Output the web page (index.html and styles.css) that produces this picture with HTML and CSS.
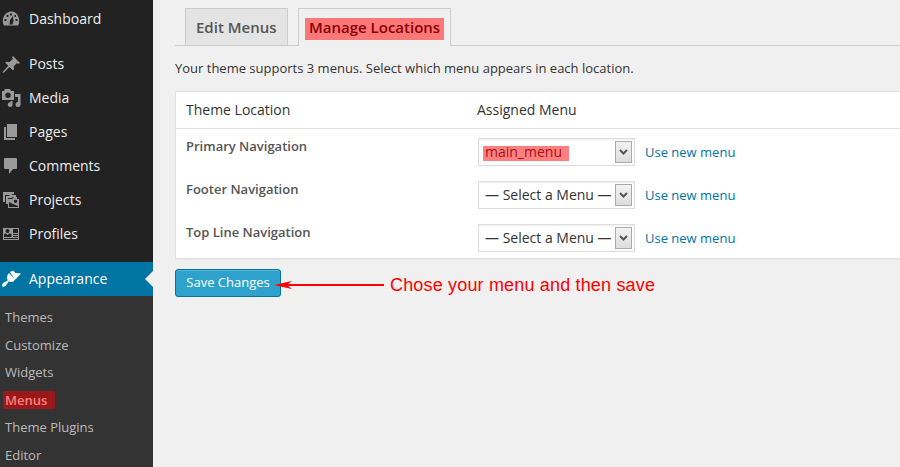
FILE: index.html
```
<!DOCTYPE html>
<html lang="en">
<head>
<meta charset="utf-8">
<title>Manage Locations</title>
<link rel="stylesheet" href="styles.css">
</head>
<body>
<div class="app">
<aside class="sidebar">
  <ul class="menu">
    <li class="item gap-after"><svg viewBox="0 0 20 20"><path fill-rule="evenodd" d="M3 16.500C1.500 14 1.200 10 3 7C6 1 15 1 17 7C18.800 10 18.500 14 17 16.500ZM8.500 15.500H11.500L12.500 12L12 7L9 11ZM9 4.500V6.500H11V4.500ZM5.500 6V8H7.500V6ZM3.500 10V12H5.500V10ZM14.500 10V12H16.500V10ZM13.500 6V8H15V6Z"/></svg><span>Dashboard</span></li>
    <li class="item"><svg viewBox="0 0 20 20"><path d="M12 2L19 9L17 10L16 9L12.500 12.500C13.500 14 13 15.500 12 16.500L8.500 13L3 18.500L1.500 19L2 17.500L7.300 11.800L4 8.500C5.500 7.500 7 7.500 8.300 8.200L12 4.700L11 3.500Z"/></svg><span>Posts</span></li>
    <li class="item"><svg viewBox="0 0 20 20"><path fill-rule="evenodd" d="M1 3H3L4 1H9L10 3H13V12H1ZM7 4.500A2.700 2.700 0 1 0 7 9.900A2.700 2.700 0 1 0 7 4.500Z"/><path d="M14 6H19.500V16.500A2.500 2.500 0 1 1 17 14V9H14ZM11.500 12V17A2.400 2.400 0 1 1 9.500 14.200V13H11.500Z"/></svg><span>Media</span></li>
    <li class="item"><svg viewBox="0 0 20 20"><path d="M6 2H16V15H6ZM3 5H5V16H14V18H3Z"/></svg><span>Pages</span></li>
    <li class="item"><svg viewBox="0 0 20 20"><path d="M4 2H15Q16 2 16 3V12Q16 13 15 13H12L8 18V13H4Q3 13 3 12V3Q3 2 4 2Z"/></svg><span>Comments</span></li>
    <li class="item"><svg viewBox="0 0 20 20"><path d="M2 2H13V4H10L9 5H4V12H2ZM5 6H8L10 4L12 5H15V7H12L10 8H7V14H5Z"/><path fill-rule="evenodd" d="M7 9H11L13 7H16V9H18V18H7ZM14.500 9.500A1.700 1.700 0 1 0 14.500 13A1.700 1.700 0 1 0 14.500 9.500ZM8 12V17H17V16L12 14Z"/></svg><span>Projects</span></li>
    <li class="item"><svg viewBox="0 0 20 20"><path fill-rule="evenodd" d="M2 4H18V16H2ZM6.500 5A2 2 0 1 0 6.500 9A2 2 0 1 0 6.500 5ZM3 13H10.500V10L8 9.500L6.500 11L5 9.500L3 10ZM12 5V9H17V5ZM12 10V11H17V10ZM12 12V13H17V12ZM3 14V15H17V14Z"/></svg><span>Profiles</span></li>
    <li class="item current"><svg viewBox="0 0 20 20"><path d="M9 3L12 1.500L14.500 4L20 4.500L14.500 10.500L13.500 10ZM8 4L14 10.500L12.500 12.500L9.500 13L7.500 12.500L4.500 17L2 18L1 16.500L2 14L6.700 11.500L6 9L6.500 6Z"/></svg><span>Appearance</span></li>
  </ul>
  <ul class="submenu">
    <li>Themes</li><li>Customize</li><li>Widgets</li><li><b class="mark-menus">Menus</b></li><li>Theme Plugins</li><li>Editor</li>
  </ul>
</aside>
<main class="content">
  <nav class="tabs"><a class="tab edit">Edit Menus</a><a class="tab active"><span>Manage Locations</span></a></nav>
  <p class="intro">Your theme supports 3 menus. Select which menu appears in each location.</p>
  <section class="table">
    <div class="row head"><span>Theme Location</span><span>Assigned Menu</span></div>
    <div class="row"><strong>Primary Navigation</strong><div class="select"><span class="mark-main">main_menu</span><i><svg viewBox="0 0 9 7"><path d="M1 1L4.500 4.500L8 1"/></svg></i></div><a>Use new menu</a></div>
    <div class="row"><strong>Footer Navigation</strong><div class="select"><span>— Select a Menu —</span><i><svg viewBox="0 0 9 7"><path d="M1 1L4.500 4.500L8 1"/></svg></i></div><a>Use new menu</a></div>
    <div class="row"><strong>Top Line Navigation</strong><div class="select"><span>— Select a Menu —</span><i><svg viewBox="0 0 9 7"><path d="M1 1L4.500 4.500L8 1"/></svg></i></div><a>Use new menu</a></div>
  </section>
  <div class="actions"><button>Save Changes</button><svg class="arrow" viewBox="0 0 112 12"><path class="line" d="M10 6H111"/><path d="M1 6L19 2L14 6L19 10Z"/></svg><span class="note">Chose your menu and then save</span></div>
</main>
</div>
</body>
</html>
```
FILE: styles.css
```
* { box-sizing: border-box; }
body { margin: 0; background: #f0f0f0; color: #333; font: 13px/18px "Open Sans", sans-serif; }
ul, p { margin: 0; padding: 0; list-style: none; }
.app { display: flex; width: 900px; height: 467px; overflow: hidden; }
.sidebar { width: 153px; flex: none; background: #333; }
.menu { background: #222; padding-top: 2px; }
.item { display: flex; align-items: center; height: 34px; color: #eee; font-size: 14px; white-space: nowrap; }
.item svg { width: 20px; height: 20px; margin: 0 8px 0 1px; fill: #999; }
.gap-after { margin-bottom: 11px; }
.current { position: relative; margin-top: 11px; background: #0074a2; color: #fff; }
.current svg { fill: #fff; }
.current::after { content: ""; position: absolute; right: 0; top: 9px; border: 8px solid transparent; border-left: 0; border-right-color: #f0f0f0; }
.submenu { padding: 8px 0 0 5px; color: #bbb; }
.submenu li { height: 27.600px; line-height: 27.600px; white-space: nowrap; }
.mark-menus { display: inline-block; height: 18px; line-height: 18px; width: 52px; margin-left: -2px; padding-left: 2px; background: #991818; color: #ff7f7f; font-weight: 600; }
.content { flex: 1; min-width: 0; padding: 8px 0 0 22px; }
.tabs { display: flex; align-items: flex-start; height: 38px; border-bottom: 1px solid #ccc; padding-left: 10px; }
.tab { height: 37px; border: 1px solid #ccc; border-bottom: 0; font-size: 15px; line-height: 22px; font-weight: 600; white-space: nowrap; }
.edit { width: 103px; padding: 7px 0 0 10px; background: #e4e4e4; color: #555; margin-right: 10px; }
.active { width: 153px; height: 38px; padding: 9px 0 0 6px; background: #f0f0f0; }
.active span { display: block; width: 139px; height: 22px; line-height: 18px; padding-left: 4px; background: #fa7878; color: #8b0000; }
.intro { margin-top: 13px; height: 32px; }
.table { height: 168px; border: 1px solid #e1e1e1; border-right: 0; background: #fff; box-shadow: 0 1px 1px rgba(0,0,0,.04); }
.row { display: grid; grid-template-columns: 292px 157px 1fr; height: 43px; padding: 9px 0 0 10px; }
.head { height: 37px; border-bottom: 1px solid #e1e1e1; font-size: 14px; padding-top: 9px; }
.head span + span { margin-left: -1px; }
.row strong { font-weight: 600; color: #555; margin-top: -1px; }
.row a { color: #0074a2; padding: 5px 0 0 10px; }
.select { display: flex; justify-content: space-between; height: 28px; border: 1px solid #ddd; padding: 2px 2px 2px 6px; box-shadow: inset 0 1px 2px rgba(0,0,0,.07); font-size: 14px; line-height: 21px; white-space: nowrap; }
.select i { width: 17px; height: 22px; flex: none; display: flex; align-items: center; justify-content: center; border: 1px solid #aaa; background: linear-gradient(#f2f2f2, #ddd); }
.select i svg { width: 9px; height: 7px; fill: none; stroke: #555; stroke-width: 2; }
.mark-main { width: 86px; height: 15px; line-height: 11px; margin: 5px 0 0 -2px; padding-left: 2px; background: #ff7f7f; color: #a0141c; }
.actions { display: flex; align-items: flex-start; margin-top: 10px; }
button { width: 106px; height: 28px; padding: 0 0 2px; border: 1px solid #0074a2; border-radius: 3px; background: #2ea2cc; box-shadow: inset 0 1px 0 rgba(120,200,230,.5); color: #fff; font: 13px/18px "Open Sans", sans-serif; }
.arrow { width: 112px; height: 12px; margin: 10px 0 0 -8px; fill: red; }
.arrow .line { stroke: red; stroke-width: 2; }
.note { margin: 4px 0 0 5px; color: red; font: 18px/24px "Liberation Sans", sans-serif; letter-spacing: .17px; white-space: nowrap; }
```
